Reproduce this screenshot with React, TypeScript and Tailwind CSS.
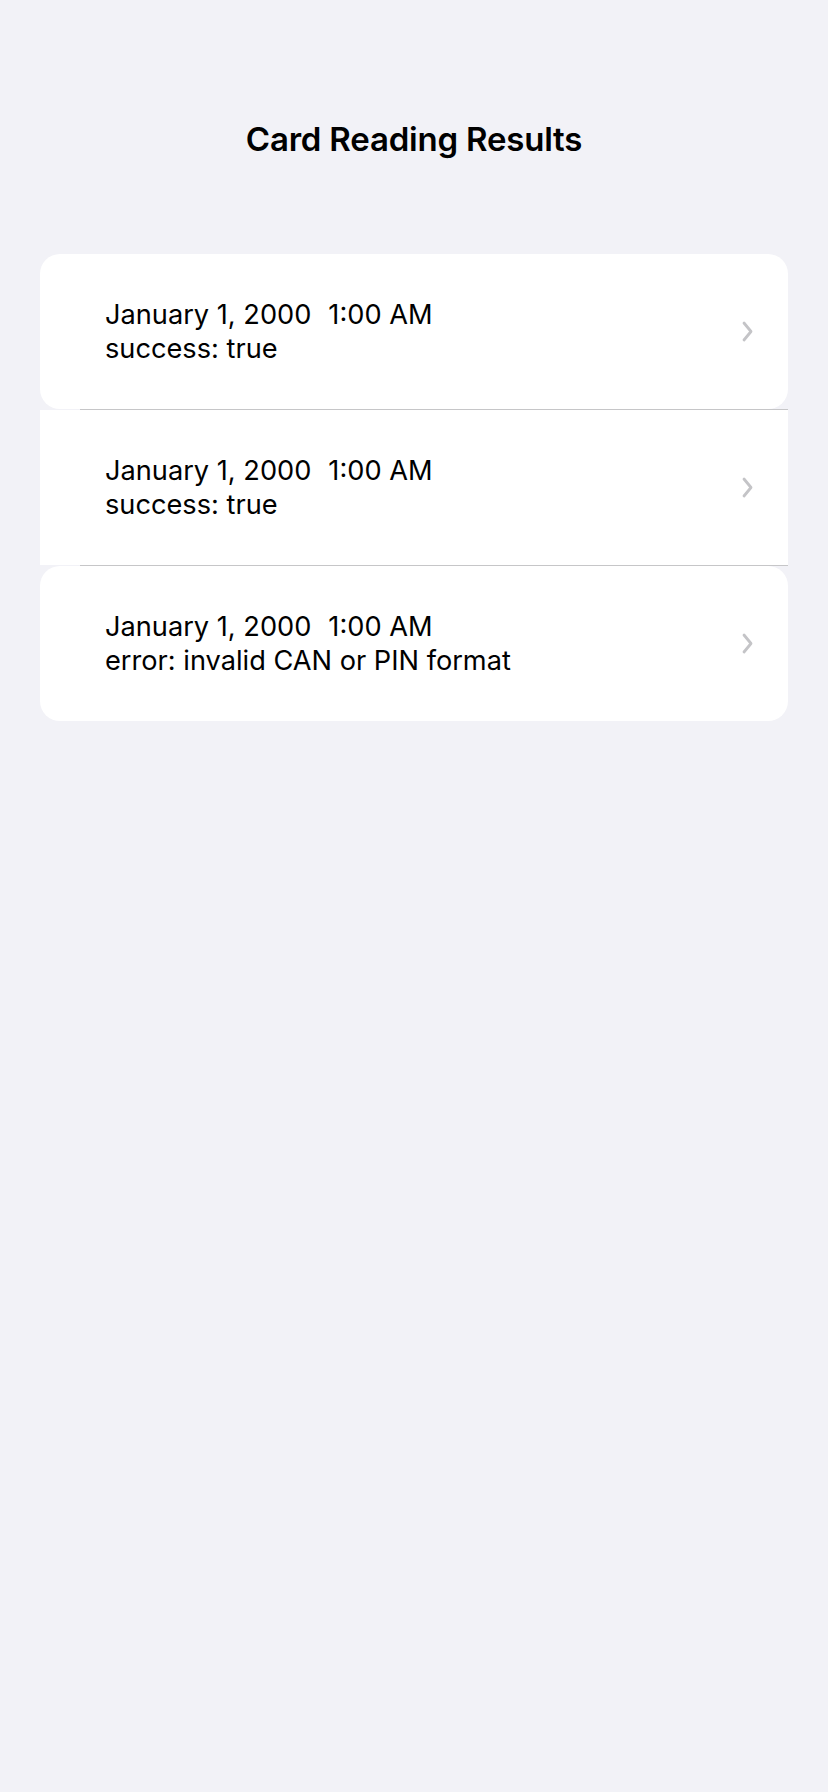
import React from "react";

interface Reading {
  id: number;
  date: string;
  time: string;
  status: string;
}

const readings: Reading[] = [
  { id: 1, date: "January 1, 2000", time: "1:00 AM", status: "success: true" },
  { id: 2, date: "January 1, 2000", time: "1:00 AM", status: "success: true" },
  { id: 3, date: "January 1, 2000", time: "1:00 AM", status: "error: invalid CAN or PIN format" },
];

const Chevron: React.FC = () => (
  <svg width="11" height="21" viewBox="0 0 11 21" fill="none">
    <path d="M2 2 L9 10.5 L2 19" stroke="#c4c4c7" strokeWidth="2.8" strokeLinecap="round" strokeLinejoin="round" />
  </svg>
);

const App: React.FC = () => {
  return (
    <div className="min-h-screen bg-[#f2f2f7] font-['Inter',sans-serif] text-black">
      <h1 className="pt-[119px] text-center text-[33px] font-semibold leading-[41px] tracking-[-0.2px]">
        Card Reading Results
      </h1>
      <div className="mx-[40px] mt-[94px]">
        {readings.map((r, i) => (
          <React.Fragment key={r.id}>
            {i > 0 && (
              <div className="h-px pl-[40px]">
                <div className="h-px bg-[#c6c6c8]" />
              </div>
            )}
            <div
              className={
                "flex h-[155px] items-center justify-between bg-white pl-[65px] pr-[35px] " +
                (i === 0 || i === readings.length - 1 ? "rounded-[20px]" : "")
              }
            >
              <div className="text-[27.2px] leading-[34px]">
                <div>
                  {r.date}
                  <span className="ml-[17px]">{r.time}</span>
                </div>
                <div>{r.status}</div>
              </div>
              <Chevron />
            </div>
          </React.Fragment>
        ))}
      </div>
    </div>
  );
};

export default App;
